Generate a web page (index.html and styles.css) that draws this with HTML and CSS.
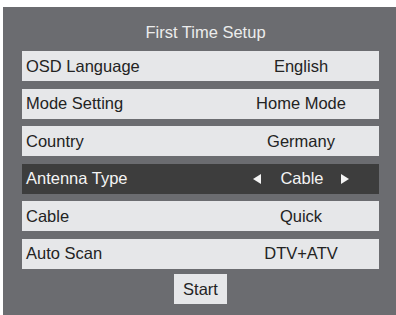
FILE: index.html
```html
<!DOCTYPE html>
<html lang="en">
<head>
  <meta charset="UTF-8">
  <title>First Time Setup</title>
  <link rel="stylesheet" href="styles.css">
</head>
<body>

  <!-- Setup menu -->
  <div class="panel">
    <div class="title">First Time Setup</div>

    <div class="menu">
      <div class="row">
        <span class="label">OSD Language</span>
        <span class="value">English</span>
      </div>
      <div class="row">
        <span class="label">Mode Setting</span>
        <span class="value">Home Mode</span>
      </div>
      <div class="row">
        <span class="label">Country</span>
        <span class="value">Germany</span>
      </div>
      <div class="row selected">
        <span class="label">Antenna Type</span>
        <span class="value">
          <i class="arrow left"></i>
          <span class="choice">Cable</span>
          <i class="arrow right"></i>
        </span>
      </div>
      <div class="row">
        <span class="label">Cable</span>
        <span class="value">Quick</span>
      </div>
      <div class="row">
        <span class="label">Auto Scan</span>
        <span class="value">DTV+ATV</span>
      </div>
    </div>

    <div class="actions">
      <button class="start">Start</button>
    </div>
  </div>

</body>
</html>
```

FILE: styles.css
```css
html, body {
  margin: 0;
  overflow: hidden;
  background-color: #ffffff;
}
body {
  font-family: "Liberation Sans", Arial, sans-serif;
  color: #232323;
}
.panel {
  margin: 7px 0 0 3px;
  width: 374px;
  height: 308px;
  padding: 0 0 0 19px;
  background-color: #6b6c70;
  box-sizing: content-box;
}
.title {
  padding: 15px 0 0 5px;
  width: 357px;
  height: 20px;
  line-height: 20px;
  text-align: center;
  font-size: 16.5px;
  color: #ececec;
  margin-bottom: 9px;
}
.menu {
  display: flex;
  flex-direction: column;
  gap: 7.5px;
  width: 357px;
}
.row {
  display: flex;
  align-items: center;
  height: 30px;
  background-color: #e6e7e9;
  font-size: 16.5px;
}
.row.selected {
  background-color: #3d3d3d;
  color: #f4f4f4;
}
.label {
  flex: 1;
  padding-left: 4px;
}
.value {
  width: 156px;
  display: flex;
  justify-content: center;
  align-items: center;
}
.choice {
  margin: 0 17px 0 19px;
}
.arrow {
  display: block;
  width: 0;
  height: 0;
  border-top: 5px solid transparent;
  border-bottom: 5px solid transparent;
}
.arrow.left {
  border-right: 8px solid #f4f4f4;
}
.arrow.right {
  border-left: 8px solid #f4f4f4;
}
.actions {
  width: 357px;
  display: flex;
  justify-content: center;
  margin-top: 5.5px;
}
.start {
  width: 53px;
  height: 30px;
  border: none;
  padding: 0;
  background-color: #e6e7e9;
  font-family: "Liberation Sans", Arial, sans-serif;
  font-size: 16.5px;
  color: #232323;
}
```
